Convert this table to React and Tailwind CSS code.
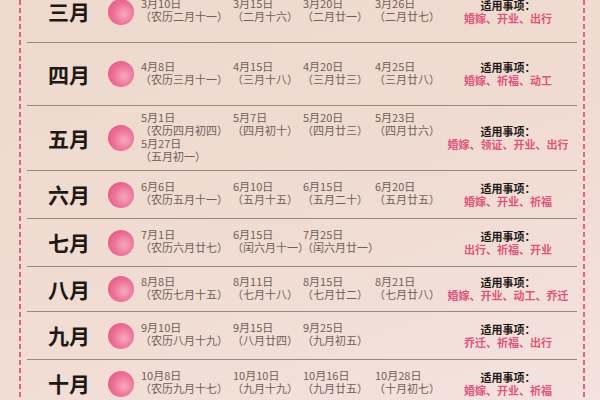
import React from "react";

const rows = [
  { m: "三月", h: 62, dates: [["3月10日", "（农历二月十一）"], ["3月15日", "（二月十六）"], ["3月20日", "（二月廿一）"], ["3月26日", "（二月廿七）"]], items: "婚嫁、开业、出行" },
  { m: "四月", h: 63, dates: [["4月8日", "（农历三月十一）"], ["4月15日", "（三月十八）"], ["4月20日", "（三月廿三）"], ["4月25日", "（三月廿八）"]], items: "婚嫁、祈福、动工" },
  { m: "五月", h: 65, dates: [["5月1日", "（农历四月初四）"], ["5月7日", "（四月初十）"], ["5月20日", "（四月廿三）"], ["5月23日", "（四月廿六）"], ["5月27日", "（五月初一）"]], items: "婚嫁、领证、开业、出行" },
  { m: "六月", h: 48, dates: [["6月6日", "（农历五月十一）"], ["6月10日", "（五月十五）"], ["6月15日", "（五月二十）"], ["6月20日", "（五月廿五）"]], items: "婚嫁、开业、祈福" },
  { m: "七月", h: 48, dates: [["7月1日", "（农历六月廿七）"], ["6月15日", "（闰六月十一）"], ["7月25日", "（闰六月廿一）"]], items: "出行、祈福、开业" },
  { m: "八月", h: 45, dates: [["8月8日", "（农历七月十五）"], ["8月11日", "（七月十八）"], ["8月15日", "（七月廿二）"], ["8月21日", "（七月廿八）"]], items: "婚嫁、开业、动工、乔迁" },
  { m: "九月", h: 48, dates: [["9月10日", "（农历八月十九）"], ["9月15日", "（八月廿四）"], ["9月25日", "（九月初五）"]], items: "乔迁、祈福、出行" },
  { m: "十月", h: 48, dates: [["10月8日", "（农历九月十七）"], ["10月10日", "（九月十九）"], ["10月16日", "（九月廿五）"], ["10月28日", "（十月初七）"]], items: "婚嫁、开业、祈福" },
];

function Row({ r, last }) {
  return (
    <div className="flex flex-col shrink-0">
      <div className="flex items-center pl-[21px] pr-px" style={{ height: r.h - 1 }}>
        <div className="w-[42px] text-[21px] leading-none font-bold text-[#1e1916] whitespace-nowrap">{r.m}</div>
        <div className="ml-[18px] w-[26px] h-[26px] rounded-full bg-[radial-gradient(circle_at_62%_58%,#f7a9c0_0%,#ee7499_45%,#df4b7b_100%)] shrink-0" />
        <div className="ml-[7px] grid grid-cols-[92px_70px_72px_65px] -mt-[3px] text-[11px] leading-[13px] text-[#6f6059] whitespace-nowrap">
          {r.dates.map((d, i) => (
            <div key={i} className="flex flex-col">
              <span>{d[0]}</span>
              <span className="-ml-[1px]">{d[1]}</span>
            </div>
          ))}
        </div>
        <div className="w-[136px] flex flex-col items-center text-[11px] leading-[13px] whitespace-nowrap">
          <span className="font-bold text-[#1f1a18]">适用事项：</span>
          <span className="font-bold text-[#e0557d]">{r.items}</span>
        </div>
      </div>
      {!last && <div className="h-px bg-[#9a887d]" />}
    </div>
  );
}

export default function App() {
  return (
    <div className="w-[600px] h-[400px] overflow-hidden flex bg-[linear-gradient(160deg,#eed9cd_0%,#f0dcd2_55%,#f4e2de_100%)] font-['Noto_Sans_CJK_SC','Noto_Sans',sans-serif]">
      <div className="w-[19px] shrink-0" />
      <div className="w-[2px] shrink-0 bg-[repeating-linear-gradient(to_bottom,#e06383_0px,#e06383_5px,transparent_5px,transparent_8px)]" />
      <div className="w-[562px] shrink-0 flex flex-col px-[6px] -mt-[19px]">
        {rows.map((r, i) => (
          <Row key={i} r={r} last={i === rows.length - 1} />
        ))}
      </div>
      <div className="w-[2px] shrink-0 bg-[repeating-linear-gradient(to_bottom,#e06383_0px,#e06383_5px,transparent_5px,transparent_8px)]" />
      <div className="flex-1" />
    </div>
  );
}
